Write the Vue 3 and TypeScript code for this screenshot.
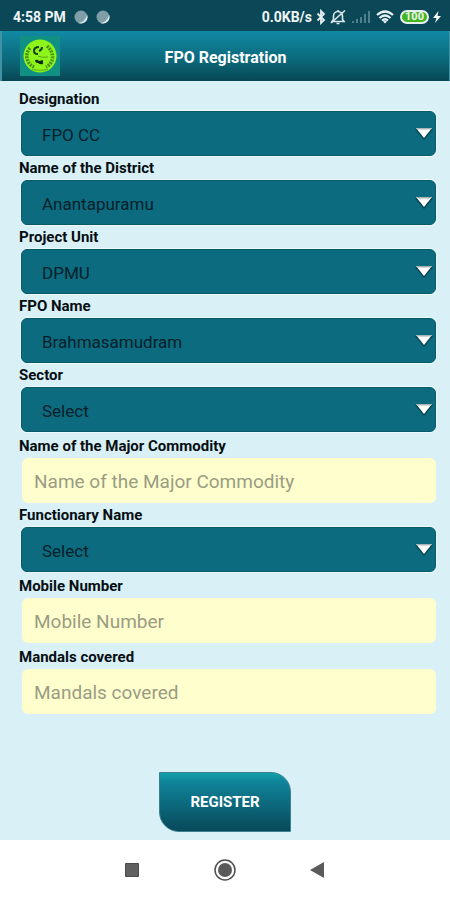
<script setup lang="ts">
import { reactive } from 'vue'

interface Field {
  id: string
  label: string
  kind: 'select' | 'text'
  options?: string[]
}

const fields: Field[] = [
  { id: 'designation', label: 'Designation', kind: 'select', options: ['FPO CC'] },
  { id: 'district', label: 'Name of the District', kind: 'select', options: ['Anantapuramu'] },
  { id: 'unit', label: 'Project Unit', kind: 'select', options: ['DPMU'] },
  { id: 'fpo', label: 'FPO Name', kind: 'select', options: ['Brahmasamudram'] },
  { id: 'sector', label: 'Sector', kind: 'select', options: ['Select'] },
  { id: 'commodity', label: 'Name of the Major Commodity', kind: 'text' },
  { id: 'functionary', label: 'Functionary Name', kind: 'select', options: ['Select'] },
  { id: 'mobile', label: 'Mobile Number', kind: 'text' },
  { id: 'mandals', label: 'Mandals covered', kind: 'text' },
]

const values = reactive<Record<string, string>>(
  Object.fromEntries(fields.map((f) => [f.id, f.options?.[0] ?? ''])),
)
</script>

<template>
  <div class="screen">
    <div class="status">
      <div class="status-group">
        <span>4:58 PM</span>
        <svg v-for="n in 2" :key="n" width="14" height="14" viewBox="0 0 14 14">
          <circle cx="7" cy="7" r="6.5" fill="#7f9ea8" />
          <path d="M13.2 5A6.5 6.5 0 0 1 4.5 13Q11 12 13.2 5Z" fill="#dbe9ed" />
        </svg>
      </div>
      <div class="status-group right">
        <span>0.0KB/s</span>
        <svg width="10" height="16" viewBox="0 0 10 16" fill="none" stroke="#e4eff2" stroke-width="1.8">
          <path d="M1.5 4.5 8 11 5 14V2l3 3-6.5 6.5" />
        </svg>
        <svg class="bell" width="16" height="16" viewBox="0 0 16 16" fill="none" stroke="#dbe8ec" stroke-width="1.6">
          <path d="M2 12.5h12l-1.5-2V7A4.5 4.5 0 0 0 3.5 7v3.5Z" />
          <path d="M6.5 14.5h3M8 1v1.500M15 1.500 1 14" />
        </svg>
        <svg width="18" height="14" viewBox="0 0 18 14" fill="#50808c">
          <path d="M0 11h2v2H0zM4 9h2v4H4zM8 7h2v6H8zM12 4h2v9h-2zM16 1h2v12h-2z" />
        </svg>
        <svg class="wifi" width="18" height="14" viewBox="0 0 18 14" fill="none" stroke="#eaf3f5" stroke-width="2.2">
          <path d="M1 5Q9-2 17 5M3.5 8Q9 3 14.5 8M6 10.5Q9 8 12 10.5" />
          <path d="M7 11.5 9 13.5l2-2Q9 10 7 11.5Z" fill="#eaf3f5" stroke="none" />
        </svg>
        <span class="battery">100</span>
        <svg width="8" height="12" viewBox="0 0 8 12" fill="#fff">
          <path d="M5.5 0 0 7h3.5L2 12l6-7H4.5Z" />
        </svg>
      </div>
    </div>

    <header class="bar">
      <svg width="40" height="40" viewBox="0 0 40 40">
        <rect width="40" height="40" rx="1" fill="#109083" />
        <circle cx="20" cy="20" r="16.5" fill="#8df51a" />
        <g fill="none" stroke="#4a8f1c" stroke-width="3.500" stroke-dasharray="2 1">
          <path d="M10 12C4 19 7 28 14 31" />
          <path d="M27 10C35 17 34 27 26 31" />
        </g>
        <path d="M12 33Q20 36 28 33" fill="none" stroke="#6fc41b" stroke-width="1.5" />
        <g fill="none" stroke="#173d10">
          <path d="M19 11q-5 0-5 4 0 3 4 3" stroke-width="2" />
          <path d="M19 15q3-1 3-4" stroke-width="2" />
          <path d="M18 20q3 2 10 1" stroke="#5aa51b" />
        </g>
        <path d="M15 24q3-1 4 1l4-1v4q-3 1-5-1-3 0-3-3Z" fill="#0c2b0c" />
      </svg>
      <h1>FPO Registration</h1>
    </header>

    <form class="form" @submit.prevent>
      <div v-for="f in fields" :key="f.id" class="field" :class="f.kind">
        <label :for="f.id">{{ f.label }}</label>
        <div v-if="f.kind === 'select'" class="select-box">
          <select :id="f.id" v-model="values[f.id]">
            <option v-for="o in f.options" :key="o">{{ o }}</option>
          </select>
          <svg class="caret" width="18" height="12" viewBox="0 0 18 12">
            <path d="M0 1h18L9 12Z" fill="#07414e" />
            <path d="M1 0h16L9 10Z" fill="#fff" />
            <path d="M1 0h16l-1 1.5H2Z" fill="#a9b4b7" />
          </svg>
        </div>
        <input v-else :id="f.id" v-model="values[f.id]" type="text" :placeholder="f.label" />
      </div>
      <button class="register" type="submit">REGISTER</button>
    </form>

    <nav class="nav">
      <button type="button" aria-label="Recent apps">
        <svg width="24" height="24" viewBox="0 0 24 24"><path d="M5.500 5.500h13v13h-13z" fill="#606060" stroke="#4c4c4c" /></svg>
      </button>
      <button type="button" aria-label="Home">
        <svg width="24" height="24" viewBox="0 0 24 24">
          <circle cx="12" cy="12" r="10" fill="none" stroke="#4f4f4f" stroke-width="1.5" />
          <circle cx="12" cy="12" r="7" fill="#5a5a5a" />
        </svg>
      </button>
      <button type="button" aria-label="Back">
        <svg width="24" height="24" viewBox="0 0 24 24"><path d="M18 4v16L4 12Z" fill="#5a5a5a" /></svg>
      </button>
    </nav>
  </div>
</template>

<style>
body {
  margin: 0;
}
</style>

<style scoped>
.screen {
  min-height: 100vh;
  display: flex;
  flex-direction: column;
  background: #d8f0f6;
  font-family: Roboto, 'Liberation Sans', sans-serif;
  color: #060e12;
}
.status {
  height: 31px;
  padding: 2px 9px 0 13px;
  display: flex;
  align-items: center;
  justify-content: space-between;
  background: #0a4857;
  color: #f0f6f8;
  font-size: 14px;
  line-height: 20px;
  font-weight: 700;
  box-sizing: border-box;
}
.status-group {
  display: flex;
  align-items: center;
  gap: 8px;
}
.right {
  gap: 4px;
}
.bell {
  margin-right: 2px;
}
.wifi {
  margin: 0 2px;
}
.battery {
  width: 29px;
  height: 14px;
  box-sizing: border-box;
  border: 2px solid #e6eff0;
  border-radius: 7px;
  background: #45b51c;
  font-size: 11px;
  line-height: 10px;
  text-align: center;
}
.bar {
  height: 50px;
  box-sizing: border-box;
  padding: 0 18px;
  display: grid;
  grid-template-columns: 40px 1fr 40px;
  align-items: center;
  background: linear-gradient(#118aa4, #0b6779 60%, #074653);
  border-left: 2px solid #4093a5;
  border-right: 1px solid #4093a5;
}
h1 {
  margin: 0;
  padding-top: 4px;
  color: #fff;
  font-size: 16px;
  line-height: 24px;
  font-weight: 700;
  text-align: center;
}
.form {
  flex: 1;
  display: flex;
  flex-direction: column;
  padding: 6px 0 8px;
}
.field {
  display: flex;
  flex-direction: column;
  margin: 0 14px 0 19px;
}
.field.text {
  margin-top: 2px;
}
label {
  font-size: 15px;
  line-height: 24px;
  font-weight: 700;
}
.select-box {
  display: grid;
  align-items: center;
  margin-left: 2px;
}
select,
input {
  width: 100%;
  height: 45px;
  box-sizing: border-box;
  font-family: inherit;
  border-radius: 6px;
}
select {
  grid-area: 1 / 1;
  appearance: none;
  padding: 2px 40px 0 20px;
  border: 1px solid #07596b;
  background: #0c6b7e;
  box-shadow: 0 0 0 1px #e9fbff;
  color: #04202a;
  font-size: 17px;
}
.caret {
  grid-area: 1 / 1;
  justify-self: end;
  margin-right: 3px;
  pointer-events: none;
}
input {
  align-self: end;
  width: calc(100% - 3px);
  padding: 2px 12px 0;
  border: 0;
  background: #ffffce;
  font-size: 19px;
  color: #060e12;
}
input::placeholder {
  color: #9a9c83;
  opacity: 1;
}
.register {
  align-self: center;
  width: 132px;
  height: 60px;
  margin-top: auto;
  border: 1px solid #3a8090;
  border-radius: 0 20px 0 20px;
  background: linear-gradient(#10a0ab, #10849a 15%, #07495a);
  color: #fff;
  font: 700 15px/20px Roboto, 'Liberation Sans', sans-serif;
}
.nav {
  height: 60px;
  padding: 0 86px;
  display: grid;
  grid-template-columns: repeat(3, 1fr);
  background: #fff;
}
.nav button {
  display: flex;
  align-items: center;
  justify-content: center;
  padding: 0;
  border: 0;
  background: none;
}
</style>
